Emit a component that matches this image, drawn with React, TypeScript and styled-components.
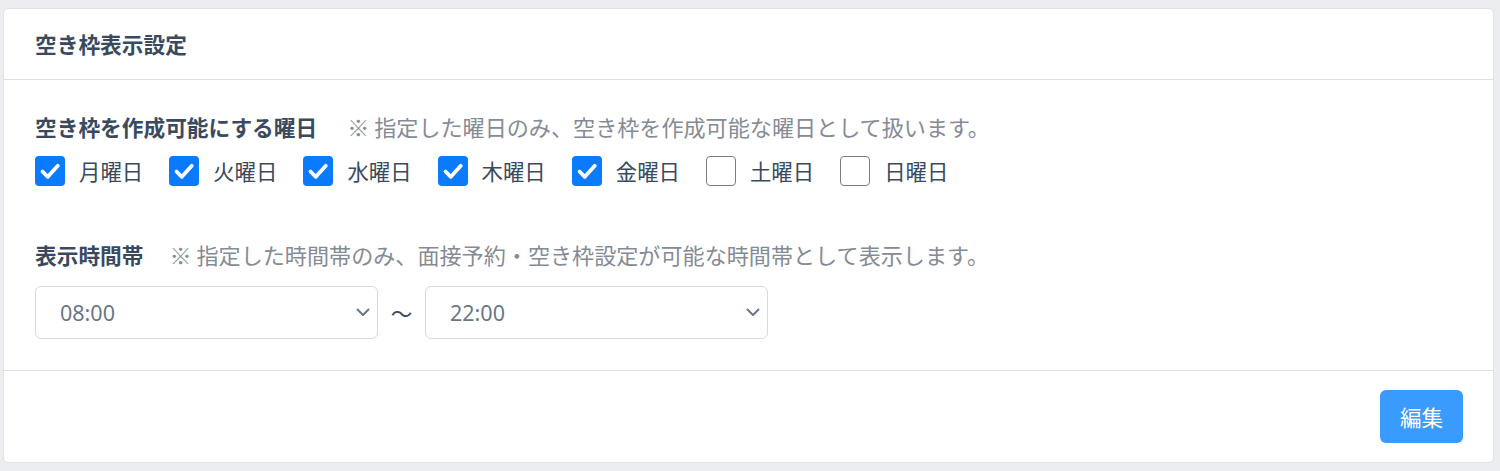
import React from "react";
import styled, { createGlobalStyle } from "styled-components";

const GlobalStyle = createGlobalStyle`
  html, body { margin: 0; padding: 0; background: #ebedf0; }
  body {
    font-family: "Noto Sans CJK JP", "Noto Sans", sans-serif;
    color: #3a4a5e;
  }
  * { box-sizing: border-box; }
`;

const Page = styled.div`
  padding: 8px 6px 9px 3px;
`;

const Card = styled.section`
  background: #fff;
  border: 1px solid #dfe2e6;
  border-radius: 5px;
  display: flex;
  flex-direction: column;
`;

const CardHeader = styled.header`
  height: 71px;
  display: flex;
  align-items: center;
  padding: 0 31px 1px;
  border-bottom: 1px solid #dcdfe3;
`;

const Title = styled.h2`
  margin: 0;
  font-size: 21.7px;
  font-weight: 700;
  line-height: 1;
  color: #394a5f;
`;

const CardBody = styled.div`
  padding: 31px 31px 31px;
  display: flex;
  flex-direction: column;
  gap: 53px;
`;

const Group = styled.div<{ $gap: number }>`
  display: flex;
  flex-direction: column;
  gap: ${(p) => p.$gap}px;
`;

const LabelLine = styled.div<{ $gap: number }>`
  display: flex;
  align-items: center;
  height: 32px;
  padding-bottom: 2px;
  gap: ${(p) => p.$gap}px;
`;

const GroupLabel = styled.span`
  font-size: 21.7px;
  font-weight: 700;
  color: #394a5f;
  white-space: nowrap;
`;

const Note = styled.span`
  font-size: 22.1px;
  color: #858b95;
  white-space: nowrap;
`;

const DayRow = styled.div`
  display: flex;
  align-items: center;
  gap: 26px;
  height: 30px;
`;

const DayItem = styled.label`
  display: flex;
  align-items: center;
  gap: 14px;
  cursor: pointer;
`;

const Box = styled.span<{ $checked: boolean }>`
  width: 30px;
  height: 30px;
  border-radius: 4px;
  display: flex;
  align-items: center;
  justify-content: center;
  background: ${(p) => (p.$checked ? "#0a7bff" : "#fff")};
  border: ${(p) => (p.$checked ? "none" : "1.5px solid #7a7d82")};
`;

const DayText = styled.span`
  font-size: 21.4px;
  color: #3a4a5e;
  line-height: 1;
`;

const TimeRow = styled.div`
  display: flex;
  align-items: center;
`;

const SelectWrap = styled.div`
  position: relative;
  width: 343px;
  height: 53px;
`;

const Select = styled.select`
  appearance: none;
  -webkit-appearance: none;
  width: 100%;
  height: 100%;
  border: 1px solid #d7dade;
  border-radius: 6px;
  background: #fff;
  padding: 0 0 0 24px;
  font-family: "Noto Sans", "Noto Sans CJK JP", sans-serif;
  font-size: 21.5px;
  color: #6b7688;
  outline: none;
`;

const Chevron = styled.svg`
  position: absolute;
  right: 8px;
  top: 20px;
  pointer-events: none;
`;

const Tilde = styled.span`
  width: 47px;
  text-align: center;
  font-size: 21.5px;
  color: #3a4a5e;
`;

const CardFooter = styled.footer`
  height: 92px;
  border-top: 1px solid #dcdfe3;
  display: flex;
  align-items: center;
  justify-content: flex-end;
  padding: 0 30px;
`;

const EditButton = styled.button`
  width: 83px;
  height: 53px;
  border: none;
  border-radius: 6px;
  background: #3a9bff;
  color: #fff;
  font-family: "Noto Sans CJK JP", sans-serif;
  font-size: 21.5px;
  cursor: pointer;
`;

const days = [
  { name: "月曜日", on: true },
  { name: "火曜日", on: true },
  { name: "水曜日", on: true },
  { name: "木曜日", on: true },
  { name: "金曜日", on: true },
  { name: "土曜日", on: false },
  { name: "日曜日", on: false },
];

const Check = () => (
  <svg width="22" height="22" viewBox="0 0 22 22">
    <path d="M3.5 11.5 L8.8 16.8 L18.8 5.8" fill="none" stroke="#fff" strokeWidth="3.8" strokeLinecap="round" strokeLinejoin="round" />
  </svg>
);

const TimeSelect = ({ value }: { value: string }) => (
  <SelectWrap>
    <Select defaultValue={value}>
      {Array.from({ length: 25 }, (_, i) => {
        const v = `${String(i).padStart(2, "0")}:00`;
        return (
          <option key={v} value={v}>
            {v}
          </option>
        );
      })}
    </Select>
    <Chevron width="14" height="12" viewBox="0 0 14 12">
      <path d="M1.5 3.5 L7 9 L12.5 3.5" fill="none" stroke="#6b7688" strokeWidth="2" strokeLinecap="round" strokeLinejoin="round" />
    </Chevron>
  </SelectWrap>
);

export default function App() {
  return (
    <Page>
      <GlobalStyle />
      <Card>
        <CardHeader>
          <Title>空き枠表示設定</Title>
        </CardHeader>
        <CardBody>
          <Group $gap={13}>
            <LabelLine $gap={30}>
              <GroupLabel>空き枠を作成可能にする曜日</GroupLabel>
              <Note>※ 指定した曜日のみ、空き枠を作成可能な曜日として扱います。</Note>
            </LabelLine>
            <DayRow>
              {days.map((d) => (
                <DayItem key={d.name}>
                  <Box $checked={d.on}>{d.on && <Check />}</Box>
                  <DayText>{d.name}</DayText>
                </DayItem>
              ))}
            </DayRow>
          </Group>
          <Group $gap={15}>
            <LabelLine $gap={26}>
              <GroupLabel>表示時間帯</GroupLabel>
              <Note>※ 指定した時間帯のみ、面接予約・空き枠設定が可能な時間帯として表示します。</Note>
            </LabelLine>
            <TimeRow>
              <TimeSelect value="08:00" />
              <Tilde>〜</Tilde>
              <TimeSelect value="22:00" />
            </TimeRow>
          </Group>
        </CardBody>
        <CardFooter>
          <EditButton>編集</EditButton>
        </CardFooter>
      </Card>
    </Page>
  );
}
